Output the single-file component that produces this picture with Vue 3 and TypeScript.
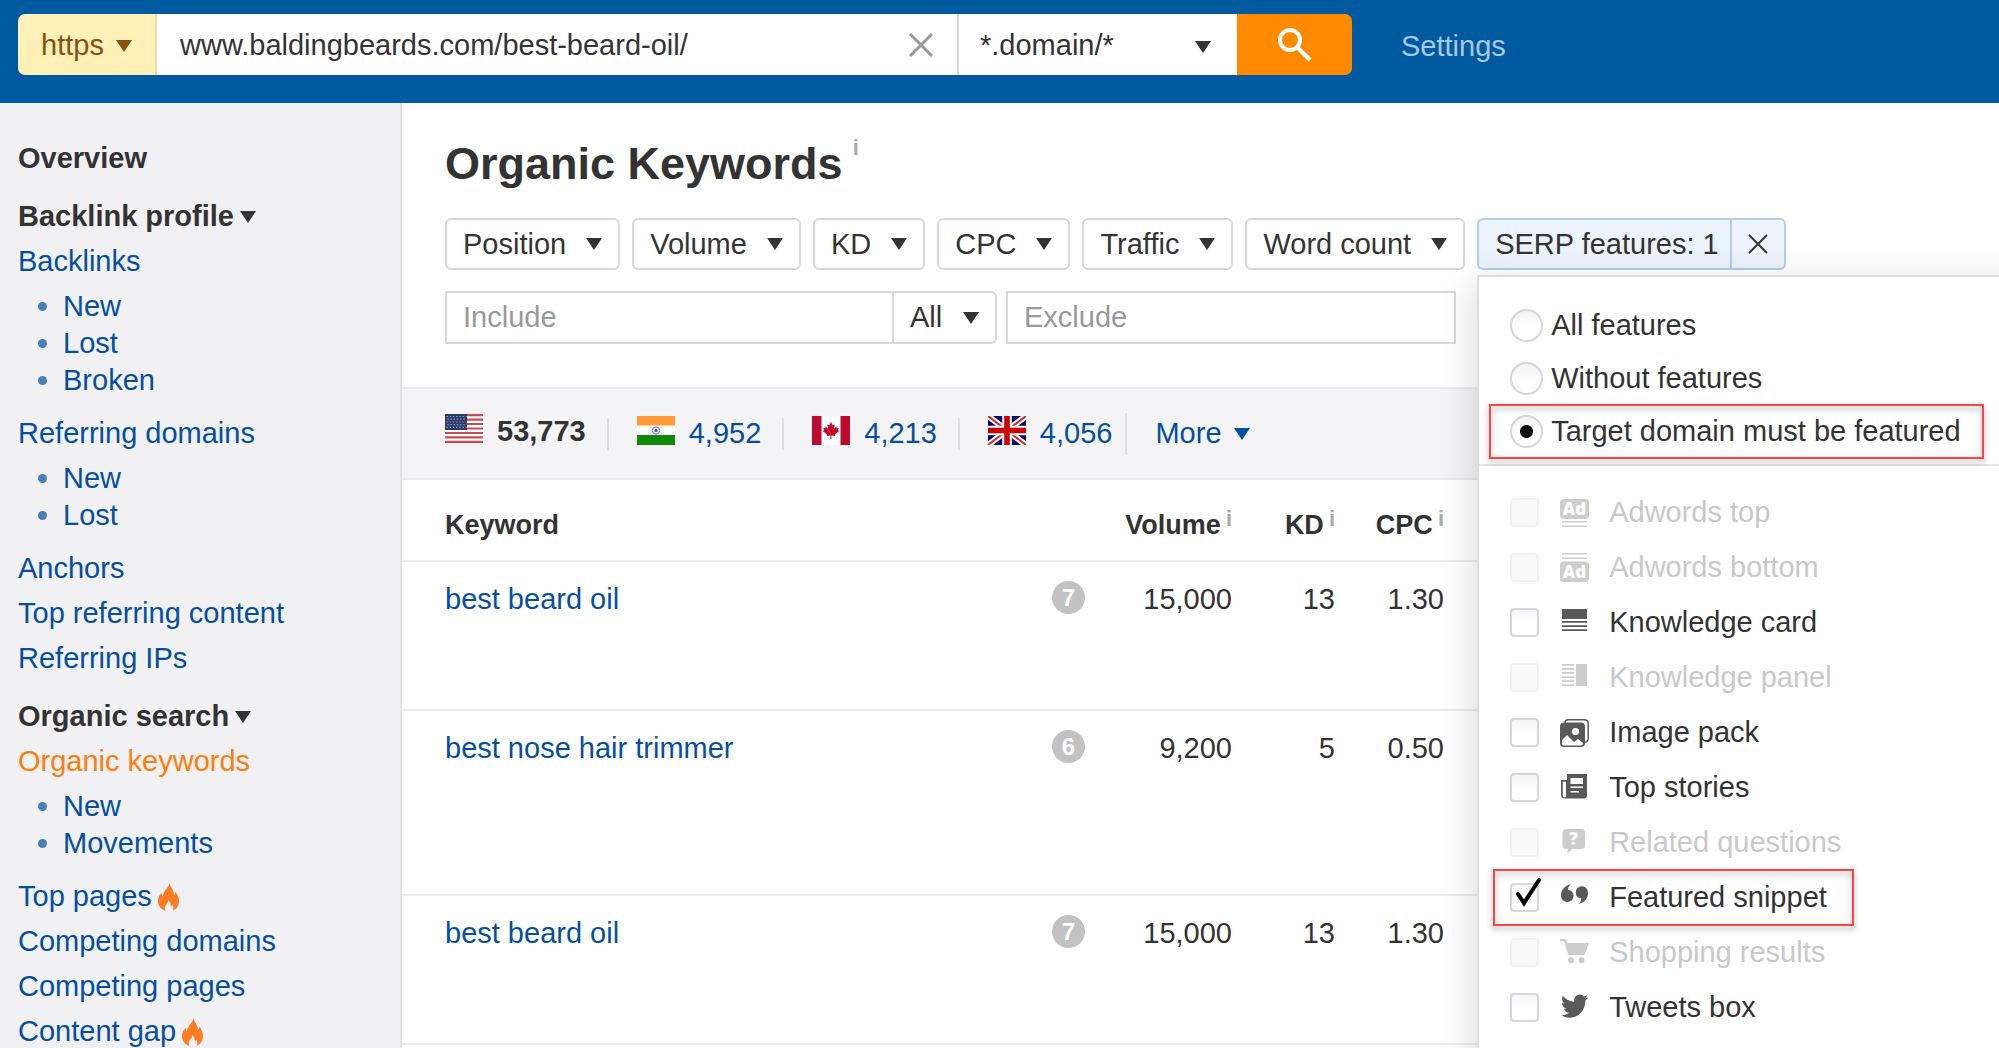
<script setup lang="ts">
import { ref } from 'vue'

interface NavItem { label: string; active?: boolean; hot?: boolean; children?: string[] }
interface NavGroup { title: string; caret: boolean; items: NavItem[] }
interface Feature { id: string; label: string; disabled?: boolean; marked?: boolean }

const groups: NavGroup[] = [
  { title: 'Overview', caret: false, items: [] },
  {
    title: 'Backlink profile', caret: true, items: [
      { label: 'Backlinks', children: ['New', 'Lost', 'Broken'] },
      { label: 'Referring domains', children: ['New', 'Lost'] },
      { label: 'Anchors' },
      { label: 'Top referring content' },
      { label: 'Referring IPs' },
    ],
  },
  {
    title: 'Organic search', caret: true, items: [
      { label: 'Organic keywords', active: true, children: ['New', 'Movements'] },
      { label: 'Top pages', hot: true },
      { label: 'Competing domains' },
      { label: 'Competing pages' },
      { label: 'Content gap', hot: true },
    ],
  },
]

const filters = ['Position', 'Volume', 'KD', 'CPC', 'Traffic', 'Word count']
const countries = [
  { code: 'us', count: '53,773' },
  { code: 'in', count: '4,952' },
  { code: 'ca', count: '4,213' },
  { code: 'gb', count: '4,056' },
]
const rows = [
  { keyword: 'best beard oil', serp: 7, volume: '15,000', kd: 13, cpc: '1.30', tall: false },
  { keyword: 'best nose hair trimmer', serp: 6, volume: '9,200', kd: 5, cpc: '0.50', tall: true },
  { keyword: 'best beard oil', serp: 7, volume: '15,000', kd: 13, cpc: '1.30', tall: false },
]
const scopes = [
  { id: 'all', label: 'All features' },
  { id: 'without', label: 'Without features' },
  { id: 'target', label: 'Target domain must be featured' },
]
const features: Feature[] = [
  { id: 'ad-top', label: 'Adwords top', disabled: true },
  { id: 'ad-bottom', label: 'Adwords bottom', disabled: true },
  { id: 'card', label: 'Knowledge card' },
  { id: 'panel', label: 'Knowledge panel', disabled: true },
  { id: 'image', label: 'Image pack' },
  { id: 'stories', label: 'Top stories' },
  { id: 'questions', label: 'Related questions', disabled: true },
  { id: 'snippet', label: 'Featured snippet', marked: true },
  { id: 'shopping', label: 'Shopping results', disabled: true },
  { id: 'tweets', label: 'Tweets box' },
]

const url = ref('www.baldingbeards.com/best-beard-oil/')
const scope = ref('target')
const chosen = ref<string[]>(['snippet'])
const include = ref('')
const exclude = ref('')
</script>

<template>
  <div class="app">
    <header class="topbar">
      <form class="search" @submit.prevent>
        <button type="button" class="protocol">https
          <svg class="caret" viewBox="0 0 16 12"><path d="M0 0h16L8 12z" /></svg>
        </button>
        <div class="url">
          <input v-model="url" type="text" aria-label="Target URL">
          <button type="button" class="clear" aria-label="Clear" @click="url = ''">
            <svg viewBox="0 0 24 24"><path d="M1 1l22 22M23 1L1 23" /></svg>
          </button>
        </div>
        <div class="mode">
          <select aria-label="Mode"><option>*.domain/*</option></select>
          <svg class="caret" viewBox="0 0 16 12"><path d="M0 0h16L8 12z" /></svg>
        </div>
        <button type="submit" class="go" aria-label="Search">
          <svg viewBox="0 0 36 36"><circle cx="13" cy="13" r="10" /><path d="M20 20l13 13" /></svg>
        </button>
      </form>
      <a class="settings" href="#">Settings</a>
    </header>

    <div class="body">
      <nav class="sidebar">
        <section v-for="g in groups" :key="g.title">
          <h2>{{ g.title }}<svg v-if="g.caret" class="caret" viewBox="0 0 16 12"><path d="M0 0h16L8 12z" /></svg></h2>
          <template v-for="item in g.items" :key="item.label">
            <a href="#" class="nav-link" :class="{ active: item.active }">{{ item.label }}<svg v-if="item.hot" class="flame" viewBox="0 0 21 28"><path d="M11.500 0c.8 4.200 3.500 6.200 4.200 9.500.2 1.200 0 2.200-.3 3 1.300-.8 1.900-2.200 2-3.800 2.200 2.800 3.600 6 3.600 9.300 0 4.800-2.600 8.200-6.200 9.700.8-1.800.7-4-.5-6-.4.8-.9 1.300-1.600 1.600.2-2.300-.6-4.500-2.500-6.300 0 3.800-3.500 5-3.500 8.300 0 .9.200 1.700.6 2.500C3.200 26.500 0 22.900 0 18.200 0 14.800 1.600 12 3.400 9.700c0 1.700.5 3 1.500 3.800C5 8 10.500 5.500 11.500 0z" /></svg></a>
            <ul v-if="item.children">
              <li v-for="c in item.children" :key="c"><a href="#">{{ c }}</a></li>
            </ul>
          </template>
        </section>
      </nav>

      <main>
        <h1>Organic Keywords<span class="info">i</span></h1>

        <div class="filters">
          <button v-for="f in filters" :key="f" type="button" class="filter">{{ f }}
            <svg class="caret" viewBox="0 0 16 12"><path d="M0 0h16L8 12z" /></svg>
          </button>
          <div class="serp">
            <button type="button" class="filter serp-label">SERP features: 1</button>
            <button type="button" class="filter serp-close" aria-label="Remove filter">
              <svg viewBox="0 0 20 20"><path d="M1 1l18 18M19 1L1 19" /></svg>
            </button>
            <div class="menu">
              <div class="scopes">
                <label v-for="s in scopes" :key="s.id" class="scope" :class="{ marked: s.id === 'target' }">
                  <input v-model="scope" type="radio" name="scope" :value="s.id">{{ s.label }}
                </label>
              </div>
              <div class="features">
                <label v-for="f in features" :key="f.id" class="feature" :class="{ disabled: f.disabled, marked: f.marked }">
                  <span class="tick">
                    <input v-model="chosen" type="checkbox" :value="f.id" :disabled="f.disabled">
                    <svg v-if="chosen.includes(f.id)" viewBox="0 0 29 29"><path d="M8 11l6 9L29-3" /></svg>
                  </span>
                  <svg class="icon" viewBox="0 0 29 29">
                    <template v-if="f.id === 'ad-top'">
                      <rect width="29" height="20" y="1" rx="4" /><path d="M2 23h25v1.500H2zM2 27.500h25V29H2z" />
                      <text x="14.500" y="17">Ad</text>
                    </template>
                    <template v-else-if="f.id === 'ad-bottom'">
                      <path d="M2 0h25v1.500H2zM2 4.500h25V6H2z" /><rect width="29" height="20.500" y="8.500" rx="4" />
                      <text x="14.500" y="25">Ad</text>
                    </template>
                    <path v-else-if="f.id === 'card'" d="M2 1h25v10H2zM2 13h25v1.800H2zM2 17.200h25V19H2zM2 21.200h25V23H2z" />
                    <path v-else-if="f.id === 'panel'" d="M16 1h11v22H16zM2 1h12v1.700H2zM2 5h12v1.700H2zM2 9h12v1.700H2zM2 13.200h12v1.700H2zM2 17.200h12v1.700H2zM2 21.300h12V23H2z" />
                    <template v-else-if="f.id === 'image'">
                      <path class="line" d="M5 5c0-2 1-3.300 3-3.300h16.500a3.700 3.700 0 0 1 3.700 3.700V20c0 2.500-1 4-3 4.300" />
                      <rect y="4.500" width="25" height="24.500" rx="4" />
                      <circle class="hole" cx="15.500" cy="13.500" r="3.600" />
                      <path class="hole" d="M2 22l5-5 7 7 4-3 5 4v.5a2 2 0 0 1-2 2H4a2 2 0 0 1-2-2z" />
                    </template>
                    <template v-else-if="f.id === 'stories'">
                      <path d="M7 1h20v21a3 3 0 0 1-3 3.500H4.500A3.500 3.500 0 0 1 1 22V7h6z" />
                      <path class="hole" d="M2.800 8.800H6v14a1.500 1.500 0 0 1-3.200 0zM10.500 5H23v6H10.500zM10.500 13.500H23V15H10.500zM10.500 18H19v1.500h-8.500z" />
                    </template>
                    <template v-else-if="f.id === 'questions'">
                      <path d="M6 1h15.500a3.500 3.500 0 0 1 3.500 3.500v13a3.500 3.500 0 0 1-3.500 3.500H12c-1.500 2-3 3.500-5 4 .7-1.200 1-2.500.8-4H6a3.500 3.500 0 0 1-3.500-3.500v-13A3.500 3.500 0 0 1 6 1z" />
                      <text x="13.500" y="17">?</text>
                    </template>
                    <path v-else-if="f.id === 'snippet'" d="M10.800 1.200C8.500 3 8 5 8.200 7c3.200.2 5.400 2.700 5.400 5.800A6.200 6.200 0 0 1 7.400 19C3.500 19 1 16 1 12 1 6.800 5 2.500 10.800 1.200zM18.500 21c2.300-1.800 2.800-3.800 2.600-5.800-3.200-.2-5.400-2.700-5.400-5.800a6.200 6.200 0 0 1 6.200-6.200C25.800 3.200 28 6.200 28 10.200c0 5.200-3.700 9.500-9.500 10.800z" />
                    <path v-else-if="f.id === 'shopping'" d="M0 1h5.500l1.800 4H29l-4.500 12H8.500L4 3H0zM14 22.300a3 3 0 1 1-6 0 3 3 0 0 1 6 0zM24.500 22.300a3 3 0 1 1-6 0 3 3 0 0 1 6 0z" />
                    <path v-else transform="translate(1 -1) scale(1.130 1.180)" d="M23.953 4.570a10 10 0 01-2.825.775 4.958 4.958 0 002.163-2.723c-.951.555-2.005.959-3.127 1.184a4.920 4.920 0 00-8.384 4.482C7.690 8.095 4.067 6.130 1.640 3.162a4.822 4.822 0 00-.666 2.475c0 1.710.87 3.213 2.188 4.096a4.904 4.904 0 01-2.228-.616v.06a4.923 4.923 0 003.946 4.827 4.996 4.996 0 01-2.212.085 4.936 4.936 0 004.604 3.417 9.867 9.867 0 01-6.102 2.105c-.39 0-.779-.023-1.170-.067a13.995 13.995 0 007.557 2.209c9.053 0 13.998-7.496 13.998-13.985 0-.21 0-.42-.015-.63A9.935 9.935 0 0024 4.590z" />
                  </svg>
                  <span>{{ f.label }}</span>
                </label>
              </div>
            </div>
          </div>
        </div>

        <div class="filters words">
          <div class="include">
            <input v-model="include" type="text" placeholder="Include" aria-label="Include">
            <div class="match">
              <select aria-label="Match"><option>All</option></select>
              <svg class="caret" viewBox="0 0 16 12"><path d="M0 0h16L8 12z" /></svg>
            </div>
          </div>
          <input v-model="exclude" type="text" class="exclude" placeholder="Exclude" aria-label="Exclude">
        </div>

        <div class="countries">
          <a v-for="c in countries" :key="c.code" href="#" class="country" :class="{ current: c.code === 'us' }">
            <svg class="flag" viewBox="0 0 38 29">
              <template v-if="c.code === 'us'">
                <rect width="38" height="29" fill="#fff" />
                <path d="M0 1.100h38M0 5.600h38M0 10h38M0 14.500h38M0 19h38M0 23.400h38M0 27.900h38" stroke="#c94a50" stroke-width="2.200" />
                <rect width="22" height="16" fill="#2b3c6b" />
                <path d="M1.500 2.500h20M2.500 5.200h19M1.500 8h20M2.500 10.700h19M1.500 13.400h20" stroke="#a9b3cd" stroke-width="1.200" stroke-dasharray="1.200 2" />
              </template>
              <template v-else-if="c.code === 'in'">
                <rect width="38" height="29" fill="#fff" />
                <rect width="38" height="9.500" fill="#ff9933" /><rect y="19" width="38" height="10" fill="#128807" />
                <circle cx="19" cy="14.500" r="3.700" fill="#e4e4f6" stroke="#6a6abf" stroke-width="1" /><circle cx="19" cy="14.500" r="1.500" fill="#4848a8" />
              </template>
              <template v-else-if="c.code === 'ca'">
                <rect width="38" height="29" fill="#fff" />
                <path d="M0 0h9.500v29H0zM28.500 0H38v29h-9.500z" fill="#bf0a30" />
                <path d="M19 6l1.700 3.200 2-1-.8 4.600 2.300-2 .5 1.400 2-.3-.7 2.300 1.200.8-4.200 3.600.4 1.400-4-.6.2 3.600h-1.200l.2-3.600-4 .6.400-1.400-4.200-3.600 1.200-.8-.7-2.300 2 .3.500-1.400 2.300 2-.8-4.600 2 1z" fill="#bf0a30" />
              </template>
              <template v-else>
                <rect width="38" height="29" fill="#006" />
                <path d="M0 0l38 29M38 0L0 29" stroke="#fff" stroke-width="6" />
                <path d="M0 0l14 10.700M38 29L24 18.300M38 0L24 10.700M0 29l14-10.700" stroke="#d22" stroke-width="2" />
                <path d="M19 0v29M0 14.500h38" stroke="#fff" stroke-width="9.600" />
                <path d="M19 0v29M0 14.500h38" stroke="#c00" stroke-width="5.600" />
              </template>
            </svg>{{ c.count }}
          </a>
          <button type="button" class="more">More
            <svg class="caret" viewBox="0 0 16 12"><path d="M0 0h16L8 12z" /></svg>
          </button>
        </div>

        <table>
          <colgroup><col class="c-key"><col class="c-serp"><col class="c-vol"><col class="c-kd"><col class="c-cpc"><col></colgroup>
          <thead>
            <tr>
              <th class="key">Keyword</th><th></th>
              <th>Volume<span class="info">i</span></th><th>KD<span class="info">i</span></th><th>CPC<span class="info">i</span></th><th></th>
            </tr>
          </thead>
          <tbody>
            <tr v-for="(r, i) in rows" :key="i" :class="{ tall: r.tall }">
              <td class="key"><a href="#">{{ r.keyword }}</a></td>
              <td><span class="badge">{{ r.serp }}</span></td>
              <td>{{ r.volume }}</td><td>{{ r.kd }}</td><td>{{ r.cpc }}</td><td></td>
            </tr>
          </tbody>
        </table>
      </main>
    </div>
  </div>
</template>

<style>
body { margin: 0; }
</style>

<style scoped>
*, *::after { box-sizing: border-box; }
.app {
  display: flex;
  flex-direction: column;
  height: 100vh;
  overflow: hidden;
  font: 29px/37px "Liberation Sans", Arial, sans-serif;
  color: #333;
  background: #fff;
}
button, input, select { font: inherit; color: inherit; margin: 0; border-radius: 0; }
button { cursor: pointer; }
a { color: #054ea1; text-decoration: none; }
.caret { flex: none; width: 16px; height: 12px; fill: currentColor; }

.topbar {
  flex: none;
  display: flex;
  align-items: flex-start;
  height: 103px;
  padding: 14px 18px;
  background: #005a9f;
}
.search { display: flex; width: 68%; max-width: 1334px; height: 61px; }
.protocol {
  display: flex;
  align-items: center;
  justify-content: center;
  gap: 12px;
  width: 139px;
  padding: 2px 0 0;
  border: 0;
  border-right: 2px solid #ebdda6;
  border-radius: 7px 0 0 7px;
  background: #fff1b8;
  color: #8b4f10;
}
.url { flex: 1; display: flex; align-items: center; padding-right: 24px; background: #fff; }
.url input { flex: 1; min-width: 0; height: 61px; padding: 2px 0 0 23px; border: 0; outline: 0; background: none; }
.clear { width: 24px; height: 24px; padding: 0; border: 0; background: none; }
.clear svg { display: block; stroke: #999; stroke-width: 3; fill: none; }
.mode { position: relative; width: 280px; border-left: 2px solid #d9d9d9; background: #fff; }
.mode select, .match select { width: 100%; height: 100%; border: 0; outline: 0; appearance: none; background: none; }
.mode select { padding: 2px 21px 0; }
.mode .caret { position: absolute; right: 26px; top: 27px; pointer-events: none; }
.go { display: flex; align-items: center; justify-content: center; width: 115px; padding: 0; border: 0; border-radius: 0 7px 7px 0; background: #ff8a00; }
.go svg { width: 36px; height: 36px; fill: none; stroke: #fff; stroke-width: 4; }
.settings { margin-left: 49px; line-height: 64px; color: #a6c8e2; }

.body { flex: 1; display: flex; min-height: 0; }
.sidebar { flex: none; width: 402px; padding: 20px 18px; border-right: 2px solid #e2e2e4; background: #f1f1f4; }
.sidebar h2 { display: flex; align-items: center; gap: 6px; margin: 13px 0 0; font-size: 29px; line-height: 45px; }
.nav-link { display: flex; align-items: center; gap: 6px; line-height: 45px; }
.nav-link.active { color: #ff7d0c; }
.flame { width: 21px; height: 28px; fill: #ff7b22; }
.sidebar ul { margin: 4px 0 12px; padding: 0; list-style: none; }
.sidebar li { display: flex; align-items: center; padding-left: 20px; }
.sidebar li::before { content: ""; width: 9px; height: 9px; margin-right: 16px; border-radius: 50%; background: #4a7ebb; }

main { flex: 1; min-width: 0; }
h1 { display: flex; margin: 33px 0 26px 43px; font-size: 45px; line-height: 56px; }
.info { color: #aaa; font-size: 22px; line-height: 24px; }
h1 .info { margin-left: 10px; }
.filters { display: flex; gap: 12px; margin-left: 43px; }
.filter {
  display: flex;
  align-items: center;
  gap: 20px;
  height: 52px;
  padding: 0 16px;
  border: 2px solid #d8d8d8;
  border-radius: 6px;
  background: #fff;
  white-space: nowrap;
}
.serp { position: relative; display: flex; }
.serp .filter { border-color: #b5cfea; background: #edf3fb; }
.serp .serp-label { padding-right: 11px; border-right: 0; border-radius: 6px 0 0 6px; }
.serp .serp-close { border-radius: 0 6px 6px 0; }
.serp-close svg { width: 20px; height: 20px; fill: none; stroke: #333; stroke-width: 2; }

.menu {
  position: absolute;
  z-index: 2;
  top: 57px;
  left: 0;
  width: 560px;
  height: 800px;
  border: 2px solid #dedede;
  background: #fff;
  box-shadow: 0 8px 36px rgba(0, 0, 0, .16);
}
.scopes { padding: 22px 0 6px 31px; border-bottom: 2px solid #e6e6e6; }
.scope { position: relative; display: flex; align-items: center; gap: 8px; height: 53px; }
.scope input {
  flex: none;
  width: 33px;
  height: 33px;
  border: 2px solid #d6d6dc;
  border-radius: 50%;
  appearance: none;
  background: linear-gradient(#f4f4f5, #fff 60%);
}
.scope input:checked { background: radial-gradient(circle, #000 6px, transparent 7px), linear-gradient(#f4f4f5, #fff 60%); }
.features { padding: 19px 0 0 31px; }
.feature { position: relative; display: flex; align-items: center; height: 55px; }
.tick { position: relative; width: 29px; height: 29px; margin-right: 21px; }
.tick input {
  display: block;
  width: 29px;
  height: 29px;
  border: 2px solid #d6d6dc;
  border-radius: 4px;
  appearance: none;
  background: linear-gradient(#f6f6f7, #fff 60%);
}
.tick svg { position: absolute; inset: 0; overflow: visible; fill: none; stroke: #000; stroke-width: 4; stroke-linecap: round; pointer-events: none; }
.icon { flex: none; width: 29px; height: 29px; margin-right: 20px; overflow: visible; fill: #5a5a5a; }
.icon .hole { fill: #fff; }
.icon .line { fill: none; stroke: #5a5a5a; stroke-width: 1.5; }
.icon text { font: 800 17px "Open Sans", sans-serif; text-anchor: middle; fill: #fff; }
.disabled { color: #c9c9c9; }
.disabled .icon { fill: #cdcdcd; }
.disabled input { border-color: #f1f1f2; background: #fafafa; }
.marked::after {
  content: "";
  position: absolute;
  top: -1px;
  bottom: -1px;
  border: 2px solid #fb4545;
  filter: drop-shadow(0 3px 3px rgba(0, 0, 0, .4));
  pointer-events: none;
}
.scope.marked::after { left: -21px; width: 495px; }
.feature.marked::after { left: -17px; width: 361px; }

.words { gap: 9px; margin-top: 21px; }
.words input { height: 53px; padding: 0 16px; border: 2px solid #d8d8d8; outline: 0; background: #fff; }
.words input::placeholder { color: #999; opacity: 1; }
.include { display: flex; }
.include input { width: 449px; }
.exclude { width: 450px; }
.match { position: relative; width: 103px; border: 2px solid #d8d8d8; border-left: 0; border-radius: 0 6px 6px 0; }
.match select { padding: 0 16px; }
.match .caret { position: absolute; right: 16px; top: 19px; pointer-events: none; }

.countries {
  display: flex;
  align-items: center;
  height: 93px;
  margin-top: 43px;
  padding-left: 43px;
  border: solid #ebebed;
  border-width: 2px 0;
  background: #f4f4f7;
}
.country { display: flex; align-items: center; gap: 14px; height: 32px; margin-right: 28px; padding-right: 21px; border-right: 2px solid #dfdfe2; }
.country:nth-of-type(4) { height: 42px; padding-right: 13px; }
.current { padding-bottom: 4px; color: #333; font-weight: 700; }
.flag { width: 38px; height: 29px; margin-bottom: 6px; }
.more { display: flex; align-items: center; gap: 12px; padding: 0; border: 0; background: none; color: #054ea1; }

table { width: 100%; border-collapse: collapse; table-layout: fixed; }
.c-key { width: 600px; }
.c-serp { width: 83px; }
.c-vol { width: 147px; }
.c-kd { width: 103px; }
.c-cpc { width: 109px; }
th, td { padding: 0; text-align: right; vertical-align: top; border-bottom: 2px solid #ebebeb; white-space: nowrap; }
th { height: 81px; padding-top: 27px; font-size: 27px; line-height: 37px; }
th .info { display: inline-block; margin-left: 5px; vertical-align: top; }
td { height: 149px; padding-top: 19px; }
.tall td { height: 185px; }
th.key, td.key { padding-left: 43px; text-align: left; }
.badge { display: inline-block; width: 33px; height: 33px; border-radius: 50%; background: #c2c2c2; color: #fff; font-size: 24px; font-weight: 700; line-height: 33px; text-align: center; vertical-align: top; }
</style>
